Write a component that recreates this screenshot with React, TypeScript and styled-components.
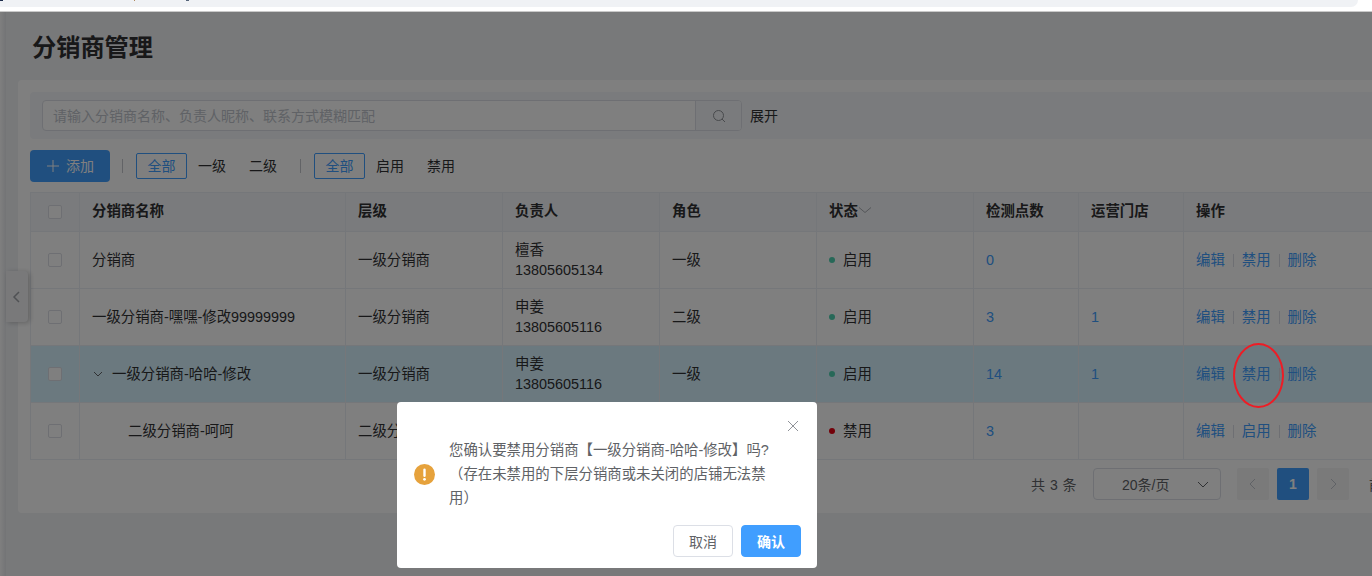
import React from "react";
import styled, { createGlobalStyle } from "styled-components";

const Global = createGlobalStyle`
  html, body { margin: 0; padding: 0; width: 1372px; height: 576px; overflow: hidden; background: #f0f2f5; }
  body { font-family: "Liberation Sans", "Noto Sans CJK SC", sans-serif; font-size: 14px; color: #303133; }
  * { box-sizing: border-box; }
`;

const Frame = styled.div`
  position: relative;
  width: 1372px;
  height: 576px;
  overflow: hidden;
  display: flex;
  flex-direction: column;
`;
const BrowserStrip = styled.div`
  height: 12px;
  flex: none;
  background: #fff;
  border-bottom: 1px solid #c9c9c9;
`;
const AddressBar = styled.div`
  width: 1358px;
  height: 7px;
  background: #f0f2f5;
  border-radius: 0 0 8px 0;
`;
const UrlFragments = styled.svg`
  display: block;
  width: 200px;
  height: 2px;
`;
const Shell = styled.div`
  flex: 1;
  display: flex;
  min-height: 0;
  position: relative;
`;
const Rail = styled.div`
  width: 6px;
  flex: none;
  background: linear-gradient(90deg, #fff, #e6e8ec);
`;
const Main = styled.main`
  flex: 1;
  min-width: 0;
  padding: 0 0 0 12px;
`;
const Title = styled.h1`
  margin: 0;
  height: 68px;
  padding: 17px 0 0 14px;
  font-size: 24.2px;
  line-height: 38px;
  font-weight: 700;
  color: #303133;
`;
const Card = styled.section`
  width: 1360px;
  height: 433px;
  background: #fff;
  border-radius: 4px 0 0 4px;
  padding: 12px 0 0 12px;
`;
const SearchPanel = styled.div`
  display: flex;
  align-items: center;
  height: 47px;
  padding: 0 12px;
  background: #f5f7fa;
  border-radius: 4px;
`;
const SearchBox = styled.div`
  display: flex;
  width: 700px;
  height: 31px;
  border: 1px solid #dcdfe6;
  border-radius: 4px;
  background: #fff;
  overflow: hidden;
`;
const SearchInput = styled.div`
  flex: 1;
  padding-left: 10px;
  font-size: 14px;
  line-height: 30px;
  color: #c0c4cc;
`;
const SearchBtn = styled.div`
  width: 46px;
  background: #f5f7fa;
  border-left: 1px solid #dcdfe6;
  display: flex;
  align-items: center;
  justify-content: center;
  color: #909399;
`;
const Expand = styled.span`
  margin: 0 0 2px 8px;
  color: #303133;
`;
const Toolbar = styled.div`
  display: flex;
  align-items: center;
  height: 32px;
  margin-top: 11px;
`;
const AddButton = styled.button`
  width: 80px;
  height: 32px;
  padding: 0 0 0 1px;
  border: 0;
  border-radius: 4px;
  background: #409eff;
  color: #fff;
  font: inherit;
  line-height: 30px;
  display: flex;
  align-items: center;
  justify-content: center;
  gap: 7px;
`;
const Sep = styled.i<{ $left: number }>`
  width: 1px;
  height: 14px;
  background: #c4c6cc;
  margin: 0 13px 0 ${(p) => p.$left}px;
`;
const Filter = styled.span<{ $active?: boolean }>`
  width: 51px;
  height: 26px;
  line-height: 24px;
  text-align: center;
  border-radius: 2px;
  padding-right: ${(p) => (p.$active ? 0 : 1)}px;
  border: 1px solid ${(p) => (p.$active ? "#409eff" : "transparent")};
  color: ${(p) => (p.$active ? "#409eff" : "#303133")};
`;
const Table = styled.table`
  table-layout: fixed;
  width: 1400px;
  margin-top: 10px;
  border-collapse: collapse;
  border: 1px solid #ebeef5;
`;
const Th = styled.th`
  height: 39px;
  padding: 0 12px 5px;
  background: #f5f7fa;
  border: 1px solid #ebeef5;
  text-align: left;
  font-weight: 700;
  font-size: 14.4px;
  color: #303133;
  white-space: nowrap;
`;
const CheckTh = styled(Th)`
  padding-bottom: 0;
`;
const Td = styled.td<{ $link?: boolean }>`
  height: 57px;
  padding: 0 12px;
  border: 1px solid #ebeef5;
  font-size: 14.4px;
  line-height: 20px;
  color: ${(p) => (p.$link ? "#409eff" : "#303133")};
  white-space: nowrap;
`;
const CheckCell = styled.div`
  display: flex;
  justify-content: center;
`;
const Check = styled.span`
  width: 14px;
  height: 14px;
  display: block;
  border: 1px solid #dcdfe6;
  border-radius: 2px;
  background: #fff;
`;
const Tr = styled.tr<{ $hl?: boolean }>`
  background: ${(p) => (p.$hl ? "#d6f3ff" : "#fff")};
`;
const NameCell = styled.div<{ $indent: number }>`
  display: flex;
  align-items: center;
  padding-left: ${(p) => p.$indent}px;
`;
const TreeArrow = styled.svg`
  width: 12px;
  height: 12px;
  margin-right: 8px;
  color: #606266;
`;
const Status = styled.div`
  display: flex;
  align-items: center;
  gap: 8px;
`;
const Dot = styled.i<{ $on: boolean }>`
  width: 6px;
  height: 6px;
  border-radius: 50%;
  background: ${(p) => (p.$on ? "#4fd1b0" : "#e60012")};
`;
const HeadWithCaret = styled.div`
  display: flex;
  align-items: center;
`;
const Caret = styled.svg`
  width: 14px;
  height: 14px;
  color: #a8abb2;
`;
const Actions = styled.div`
  display: flex;
  align-items: center;
  color: #409eff;
`;
const ActionSep = styled.i`
  width: 1px;
  height: 13px;
  margin: 0 8px;
  background: #dcdfe6;
`;
const Pager = styled.div`
  display: flex;
  align-items: center;
  height: 32px;
  margin-top: 8px;
  padding-left: 1001px;
  white-space: nowrap;
  color: #606266;
`;
const Total = styled.span`
  width: 62px;
  flex: none;
  letter-spacing: 0.5px;
`;
const PageSelect = styled.div`
  width: 128px;
  height: 32px;
  flex: none;
  border: 1px solid #dcdfe6;
  border-radius: 4px;
  background: #fff;
  display: flex;
  align-items: center;
  padding-left: 28px;
  justify-content: space-between;
  padding-right: 10px;
`;
const PageBtn = styled.div<{ $active?: boolean }>`
  width: 32px;
  height: 32px;
  flex: none;
  margin-left: 8px;
  border-radius: 2px;
  display: flex;
  align-items: center;
  justify-content: center;
  font-weight: 700;
  background: ${(p) => (p.$active ? "#409eff" : "#f4f4f5")};
  color: ${(p) => (p.$active ? "#fff" : "#c0c4cc")};
`;
const FirstPageBtn = styled(PageBtn)`
  margin-left: 16px;
`;
const Goto = styled.span`
  margin-left: 20px;
  flex: none;
`;
const CollapseTab = styled.div`
  position: absolute;
  left: 6px;
  top: 271px;
  width: 22px;
  height: 51px;
  background: #f2f3f5;
  border-radius: 0 4px 4px 0;
  box-shadow: 2px 1px 5px rgba(0, 0, 0, 0.22);
  display: flex;
  align-items: center;
  justify-content: center;
  color: #a0a3a8;
  svg {
    stroke-width: 1.5;
  }
`;
const Overlay = styled.div`
  position: absolute;
  left: 0;
  right: 0;
  top: 12px;
  bottom: 0;
  background: rgba(0, 0, 0, 0.5);
`;
const RedEllipse = styled.div`
  position: absolute;
  left: 1233px;
  top: 343px;
  width: 51px;
  height: 65px;
  border: 2px solid #ee1c25;
  border-radius: 50%;
`;
const Modal = styled.div`
  position: absolute;
  left: 397px;
  top: 402px;
  width: 420px;
  height: 166px;
  background: #fff;
  border-radius: 4px;
  padding: 36px 16px 0 17px;
`;
const CloseIcon = styled.svg`
  position: absolute;
  right: 18px;
  top: 18px;
  width: 12px;
  height: 12px;
  color: #909399;
`;
const ModalBody = styled.div`
  display: flex;
  align-items: center;
  gap: 14px;
`;
const WarnIcon = styled.svg`
  width: 21px;
  height: 21px;
  flex: none;
`;
const ModalText = styled.p`
  margin: 0;
  width: 325px;
  font-size: 14.4px;
  line-height: 24px;
  color: #606266;
`;
const ModalFoot = styled.div`
  display: flex;
  justify-content: flex-end;
  gap: 8px;
  margin-top: 15px;
`;
const ModalBtn = styled.button<{ $primary?: boolean }>`
  width: 60px;
  height: 32px;
  padding: 0;
  border-radius: 4px;
  font: inherit;
  font-weight: ${(p) => (p.$primary ? 700 : 400)};
  border: 1px solid ${(p) => (p.$primary ? "#409eff" : "#dcdfe6")};
  background: ${(p) => (p.$primary ? "#409eff" : "#fff")};
  color: ${(p) => (p.$primary ? "#fff" : "#606266")};
`;

const Chevron = ({ dir }: { dir: "left" | "right" | "down" }) => {
  const d = dir === "left" ? "M9 2 4 7l5 5" : dir === "right" ? "M5 2l5 5-5 5" : "M2 5l5 5 5-5";
  return (
    <svg width="14" height="14" viewBox="0 0 14 14" fill="none" stroke="currentColor" strokeWidth="1">
      <path d={d} />
    </svg>
  );
};

const rows = [
  { name: "分销商", indent: 0, level: "一级分销商", person: "檀香", phone: "13805605134", role: "一级", on: true, pts: "0", store: "", tree: false, hl: false },
  { name: "一级分销商-嘿嘿-修改99999999", indent: 0, level: "一级分销商", person: "申姜", phone: "13805605116", role: "二级", on: true, pts: "3", store: "1", tree: false, hl: false },
  { name: "一级分销商-哈哈-修改", indent: 0, level: "一级分销商", person: "申姜", phone: "13805605116", role: "一级", on: true, pts: "14", store: "1", tree: true, hl: true },
  { name: "二级分销商-呵呵", indent: 36, level: "二级分销商", person: "申姜", phone: "13805605116", role: "二级", on: false, pts: "3", store: "", tree: false, hl: false },
];

export default function App() {
  return (
    <Frame>
      <Global />
      <BrowserStrip>
        <AddressBar>
          <UrlFragments viewBox="0 0 200 2">
            <rect x="0" y="0" width="3" height="1" fill="#1c2b4a" />
            <rect x="134" y="0" width="1" height="1" fill="#b08a60" />
            <rect x="186" y="0" width="3" height="1" fill="#56657a" />
          </UrlFragments>
        </AddressBar>
      </BrowserStrip>
      <Shell>
        <Rail />
        <Main>
          <Title>分销商管理</Title>
          <Card>
            <SearchPanel>
              <SearchBox>
                <SearchInput>请输入分销商名称、负责人昵称、联系方式模糊匹配</SearchInput>
                <SearchBtn>
                  <svg width="14" height="14" viewBox="0 0 14 14" fill="none" stroke="currentColor">
                    <circle cx="6.5" cy="6.5" r="5" />
                    <path d="M10 10l3 3" />
                  </svg>
                </SearchBtn>
              </SearchBox>
              <Expand>展开</Expand>
            </SearchPanel>
            <Toolbar>
              <AddButton>
                <svg width="12" height="12" viewBox="0 0 12 12" stroke="currentColor" fill="none">
                  <path d="M6 0v12M0 6h12" />
                </svg>
                添加
              </AddButton>
              <Sep $left={12} />
              <Filter $active>全部</Filter>
              <Filter>一级</Filter>
              <Filter>二级</Filter>
              <Sep $left={11} />
              <Filter $active>全部</Filter>
              <Filter>启用</Filter>
              <Filter>禁用</Filter>
            </Toolbar>
            <Table>
              <colgroup>
                <col width="49" />
                <col width="266" />
                <col width="157" />
                <col width="157" />
                <col width="157" />
                <col width="157" />
                <col width="105" />
                <col width="105" />
                <col width="247" />
              </colgroup>
              <thead>
                <tr>
                  <CheckTh><CheckCell><Check /></CheckCell></CheckTh>
                  <Th>分销商名称</Th>
                  <Th>层级</Th>
                  <Th>负责人</Th>
                  <Th>角色</Th>
                  <Th>
                    <HeadWithCaret>
                      状态
                      <Caret viewBox="0 0 14 14" fill="none" stroke="currentColor"><path d="M1 4.5l6 5 6-5" /></Caret>
                    </HeadWithCaret>
                  </Th>
                  <Th>检测点数</Th>
                  <Th>运营门店</Th>
                  <Th>操作</Th>
                </tr>
              </thead>
              <tbody>
                {rows.map((r) => (
                  <Tr key={r.name} $hl={r.hl}>
                    <Td><CheckCell><Check /></CheckCell></Td>
                    <Td>
                      <NameCell $indent={r.indent}>
                        {r.tree && (
                          <TreeArrow viewBox="0 0 12 12" fill="none" stroke="currentColor"><path d="M2 4l4 4 4-4" /></TreeArrow>
                        )}
                        {r.name}
                      </NameCell>
                    </Td>
                    <Td>{r.level}</Td>
                    <Td>{r.person}<br />{r.phone}</Td>
                    <Td>{r.role}</Td>
                    <Td><Status><Dot $on={r.on} />{r.on ? "启用" : "禁用"}</Status></Td>
                    <Td $link>{r.pts}</Td>
                    <Td $link>{r.store}</Td>
                    <Td>
                      <Actions>
                        编辑<ActionSep />{r.on ? "禁用" : "启用"}<ActionSep />删除
                      </Actions>
                    </Td>
                  </Tr>
                ))}
              </tbody>
            </Table>
            <Pager>
              <Total>共 3 条</Total>
              <PageSelect>20条/页<Chevron dir="down" /></PageSelect>
              <FirstPageBtn><Chevron dir="left" /></FirstPageBtn>
              <PageBtn $active>1</PageBtn>
              <PageBtn><Chevron dir="right" /></PageBtn>
              <Goto>前往</Goto>
            </Pager>
          </Card>
        </Main>
      </Shell>
      <CollapseTab><Chevron dir="left" /></CollapseTab>
      <Overlay />
      <RedEllipse />
      <Modal>
        <CloseIcon viewBox="0 0 12 12" fill="none" stroke="currentColor"><path d="M1 1l10 10M11 1 1 11" /></CloseIcon>
        <ModalBody>
          <WarnIcon viewBox="0 0 21 21">
            <circle cx="10.5" cy="10.5" r="10.5" fill="#e6a23c" />
            <rect x="9.3" y="4.5" width="2.4" height="8.5" rx="1.2" fill="#fff" />
            <circle cx="10.5" cy="15.3" r="1.4" fill="#fff" />
          </WarnIcon>
          <ModalText>您确认要禁用分销商【一级分销商-哈哈-修改】吗?（存在未禁用的下层分销商或未关闭的店铺无法禁用）</ModalText>
        </ModalBody>
        <ModalFoot>
          <ModalBtn>取消</ModalBtn>
          <ModalBtn $primary>确认</ModalBtn>
        </ModalFoot>
      </Modal>
    </Frame>
  );
}
